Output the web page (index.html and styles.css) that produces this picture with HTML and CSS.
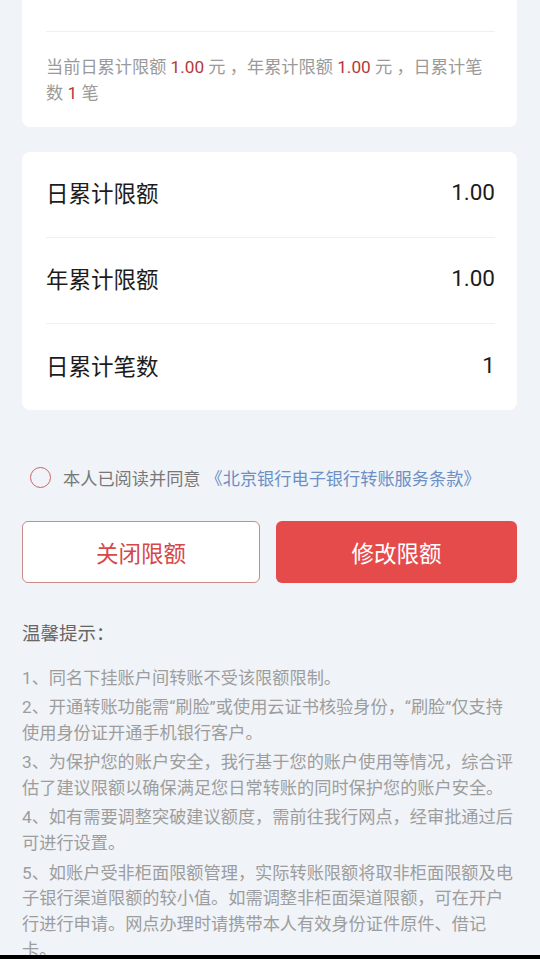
FILE: index.html
```html
<!DOCTYPE html>
<html lang="zh-CN">
<head>
    <meta charset="UTF-8">
    <meta name="viewport" content="width=device-width, initial-scale=1.0">
    <title>转账限额设置</title>
    <link rel="stylesheet" href="styles.css">
</head>
<body>
    <div class="screen">
        <div class="content">
            <div class="card summary">
                <div class="summary-top"></div>
                <p class="summary-text">当前日累计限额 <span class="num">1.00</span> 元 ，年累计限额 <span class="num">1.00</span> 元 ，日累计笔数 <span class="num">1</span> 笔</p>
            </div>

            <div class="card limits">
                <div class="row">
                    <span class="label">日累计限额</span>
                    <span class="value">1.00</span>
                </div>
                <div class="row">
                    <span class="label">年累计限额</span>
                    <span class="value">1.00</span>
                </div>
                <div class="row">
                    <span class="label">日累计笔数</span>
                    <span class="value">1</span>
                </div>
            </div>

            <div class="agree">
                <span class="check"></span>
                <span class="agree-text">本人已阅读并同意</span>
                <a class="agree-link" href="#">《北京银行电子银行转账服务条款》</a>
            </div>

            <div class="actions">
                <button class="btn btn-ghost">关闭限额</button>
                <button class="btn btn-primary">修改限额</button>
            </div>

            <div class="tips">
                <h3 class="tips-title">温馨提示：</h3>
                <p>1、同名下挂账户间转账不受该限额限制。</p>
                <p>2、开通转账功能需“刷脸”或使用云证书核验身份，“刷脸”仅支持使用身份证开通手机银行客户。</p>
                <p>3、为保护您的账户安全，我行基于您的账户使用等情况，综合评估了建议限额以确保满足您日常转账的同时保护您的账户安全。</p>
                <p>4、如有需要调整突破建议额度，需前往我行网点，经审批通过后可进行设置。</p>
                <p>5、如账户受非柜面限额管理，实际转账限额将取非柜面限额及电子银行渠道限额的较小值。如需调整非柜面渠道限额，可在开户行进行申请。网点办理时请携带本人有效身份证件原件、借记卡。</p>
            </div>
        </div>
        <div class="nav-edge"></div>
    </div>
</body>
</html>
```

FILE: styles.css
```css
* { box-sizing: border-box; }
body {
    margin: 0;
    background: #f0f3f7;
    font-family: Roboto, "Noto Sans CJK SC", sans-serif;
    color: #222;
}
.screen {
    height: 959px;
    display: flex;
    flex-direction: column;
}
.content {
    flex: 1;
    overflow: hidden;
    padding: 0 23px 0 22px;
}
.nav-edge { height: 4px; background: #000; }

.card {
    background: #fff;
    border-radius: 8px;
    padding: 0 22px 0 24px;
}
.summary { border-radius: 0 0 8px 8px; }
.summary-top {
    height: 32px;
    border-bottom: 1px solid #eef0f2;
}
.summary-text {
    margin: 0;
    padding: 22px 0 21px;
    font-size: 17.2px;
    line-height: 26px;
    color: #9a9a9a;
}
.num { color: #b5383a; }

.limits { margin-top: 25px; }
.row {
    height: 86px;
    display: flex;
    align-items: center;
    justify-content: space-between;
    padding-bottom: 5px;
    border-bottom: 1px solid #eef0f2;
    font-size: 22.5px;
    color: #1c1c1c;
}
.row:last-child { border-bottom: none; }

.agree {
    display: flex;
    align-items: center;
    height: 26px;
    margin: 54px 0 31px;
    padding-left: 8px;
    font-size: 17.2px;
}
.check {
    width: 21px;
    height: 21px;
    border: 1.5px solid #cc6462;
    border-radius: 50%;
    margin-right: 12px;
}
.agree-text { color: #787878; margin-right: 5px; }
.agree-link { color: #6c8fc6; text-decoration: none; }

.actions {
    display: grid;
    grid-template-columns: 238px 1fr;
    gap: 16px;
}
.btn {
    height: 62px;
    border-radius: 6px;
    font-family: inherit;
    font-size: 22.5px;
    cursor: pointer;
}
.btn-ghost {
    background: #fff;
    border: 1px solid #c98a88;
    color: #d4484a;
}
.btn-primary {
    background: #e64b4b;
    border: none;
    color: #fff;
}

.tips-title {
    margin: 38px 0 19px;
    font-size: 18.5px;
    font-weight: normal;
    line-height: 26px;
    color: #666;
}
.tips p {
    margin: 0 0 3.5px;
    font-size: 17.2px;
    line-height: 25.8px;
    color: #9d9d9d;
}
```
